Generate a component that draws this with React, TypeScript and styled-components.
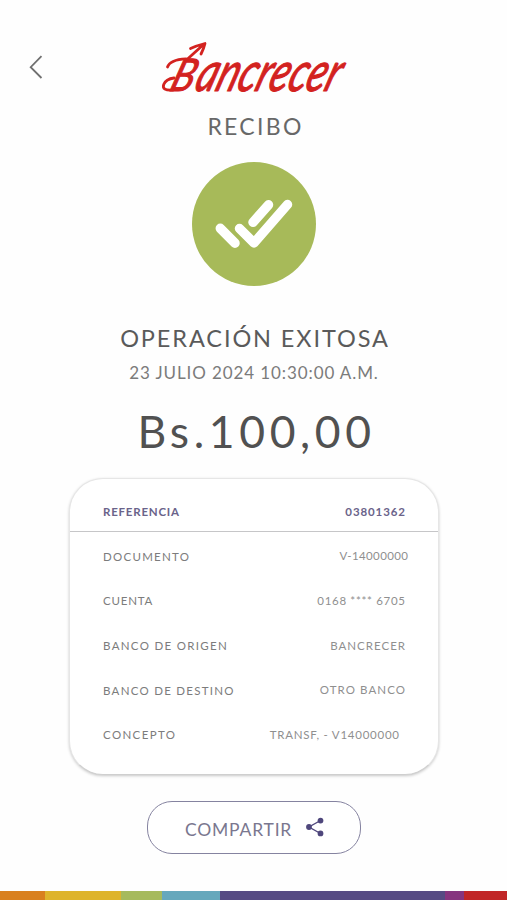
import React from "react";
import styled, { createGlobalStyle } from "styled-components";

const GlobalStyle = createGlobalStyle`
  * { box-sizing: border-box; }
  body { margin: 0; background: #fefefe; font-family: Lato, "Open Sans", sans-serif; }
`;

const Screen = styled.main`
  display: flex;
  flex-direction: column;
  width: 507px;
  height: 900px;
  overflow: hidden;
  background: #fefefe;
`;

const Header = styled.header`
  display: grid;
  grid-template-columns: 150px 207px 150px;
  height: 112px;
  padding-top: 36px;
`;

const BackButton = styled.button`
  width: 24px;
  height: 30px;
  margin: 16px 0 0 24px;
  padding: 0;
  border: 0;
  background: none;
  svg { display: block; }
`;

const Logo = styled.svg`
  display: block;
  overflow: visible;
`;

const LogoText = styled.text`
  font-family: Lato, sans-serif;
  font-style: italic;
  font-weight: 400;
  fill: #d3221f;
  stroke: #d3221f;
  stroke-width: 1.1px;
  stroke-linejoin: round;
`;

const Line = styled.div<{ $size: number; $height: number; $spacing: number; $color: string; $top?: number; $shift?: number }>`
  flex: none;
  font-size: ${(p) => p.$size}px;
  line-height: ${(p) => p.$height}px;
  letter-spacing: ${(p) => p.$spacing}px;
  color: ${(p) => p.$color};
  margin-top: ${(p) => p.$top ?? 0}px;
  padding-left: ${(p) => p.$shift ?? 0}px;
  text-align: center;
  white-space: nowrap;
`;

const Badge = styled.div`
  flex: none;
  width: 124px;
  height: 124px;
  margin: 22px 0 0 192px;
  border-radius: 50%;
  background: #a7ba59;
  svg { display: block; }
`;

const Card = styled.section`
  flex: none;
  width: 370px;
  height: 297px;
  margin: 20px 0 0 69px;
  border: 1px solid #e6e6e6;
  border-bottom-color: #cfcfcf;
  border-radius: 34px;
  background: #fff;
  box-shadow: 0 1px 3px rgba(0, 0, 0, 0.22);
`;

const Row = styled.div<{ $head?: boolean; $inset?: number }>`
  display: flex;
  justify-content: space-between;
  align-items: center;
  height: ${(p) => (p.$head ? "53px" : "44.7px")};
  padding: ${(p) => (p.$head ? "14px" : "0")} ${(p) => p.$inset ?? 33}px 0 33px;
  border-bottom: ${(p) => (p.$head ? "1px solid #c6c6c8" : "0")};
  margin-bottom: ${(p) => (p.$head ? "2.4px" : "0")};
  font-size: 11.5px;
  line-height: 16px;
  white-space: nowrap;
`;

const Label = styled.span<{ $spacing: number; $accent?: boolean }>`
  letter-spacing: ${(p) => p.$spacing}px;
  color: ${(p) => (p.$accent ? "#6a638a" : "#7c7c7c")};
  font-weight: ${(p) => (p.$accent ? 700 : 400)};
`;

const Value = styled(Label)`
  color: ${(p) => (p.$accent ? "#6a638a" : "#8f8f8f")};
  margin: 0 ${(p) => -p.$spacing}px 1px 0;
`;

const ShareButton = styled.button`
  display: flex;
  flex: none;
  align-items: center;
  width: 214px;
  height: 53px;
  margin: 26px 0 0 147px;
  padding: 0 0 0 37px;
  border: 1px solid #8583a0;
  border-radius: 25px;
  background: #fff;
  color: #7a778f;
  font: 400 17.5px/22px Lato, sans-serif;
  letter-spacing: 0.8px;
  span { padding-top: 5px; }
  svg { display: block; margin: 0 0 2px 13px; }
`;

const Stripe = styled.footer`
  display: grid;
  grid-template-columns: 45px 76px 41px 58px 225px 19px 43px;
  height: 9px;
  margin-top: auto;
`;

const Band = styled.span<{ $color: string }>`
  background: ${(p) => p.$color};
`;

const rows = [
  { label: "DOCUMENTO", ls: 1.27, value: "V-14000000", vs: 0.38, inset: 30 },
  { label: "CUENTA", ls: 0.8, value: "0168 **** 6705", vs: 0.68, inset: 33 },
  { label: "BANCO DE ORIGEN", ls: 1.32, value: "BANCRECER", vs: 1, inset: 33 },
  { label: "BANCO DE DESTINO", ls: 1.27, value: "OTRO BANCO", vs: 1.08, inset: 33 },
  { label: "CONCEPTO", ls: 1.36, value: "TRANSF, - V14000000", vs: 0.75, inset: 39 },
];

const bands = ["#d9801f", "#deb42c", "#a6ba5d", "#66a8bc", "#564b83", "#86357f", "#c12627"];

export default function App() {
  return (
    <>
      <GlobalStyle />
      <Screen>
        <Header>
          <BackButton aria-label="Volver">
            <svg width="24" height="30" viewBox="0 0 24 30" fill="none" stroke="#707070" strokeWidth="1.8">
              <path d="M17.5 4.2 6.7 15.2 17.5 26" />
            </svg>
          </BackButton>
          <Logo width="207" height="70" viewBox="150 36 207 70" role="img" aria-label="Bancrecer">
            <g transform="translate(0 91) skewX(-19)">
              <LogoText transform="translate(168 0) scale(0.85 1)" fontSize="45">B</LogoText>
              <LogoText transform="translate(193 0) scale(0.73 1)" fontSize="55">ancrecer</LogoText>
            </g>
            <g fill="none" stroke="#d3221f" strokeWidth="2.8" strokeLinecap="round" strokeLinejoin="round">
              <path d="M187 59.5 203.5 44.5M190.5 48.5Q197 45.5 205 43.5Q204 48 201 54" />
              <path d="M167.5 67Q170 59.5 186 58.8M174 78Q166 79 163.7 84.5Q161.5 91 173 90" />
            </g>
          </Logo>
        </Header>
        <Line $size={23} $height={28} $spacing={2.3} $color="#686868" $shift={4}>RECIBO</Line>
        <Badge>
          <svg width="124" height="124" viewBox="192 162 124 124" fill="none" stroke="#fff" strokeWidth="9.5" strokeLinecap="round" strokeLinejoin="round">
            <path d="M220.3 228.3 235 243.2" />
            <path d="M239.5 228.5 254 243 287.5 204.5" />
            <path d="M253 222.3 268.5 204.8" />
          </svg>
        </Badge>
        <Line $size={23.5} $height={28} $spacing={1.9} $color="#5a5a5a" $top={38} $shift={3}>OPERACIÓN EXITOSA</Line>
        <Line $size={17} $height={20} $spacing={0.9} $color="#7b7b7b" $top={11} $shift={1}>23 JULIO 2024 10:30:00 A.M.</Line>
        <Line $size={44.5} $height={54} $spacing={4.6} $color="#515151" $top={21} $shift={6}>Bs.100,00</Line>
        <Card>
          <Row $head>
            <Label $accent $spacing={0.78}>REFERENCIA</Label>
            <Value $accent $spacing={0.9}>03801362</Value>
          </Row>
          {rows.map((r) => (
            <Row key={r.label} $inset={r.inset}>
              <Label $spacing={r.ls}>{r.label}</Label>
              <Value $spacing={r.vs}>{r.value}</Value>
            </Row>
          ))}
        </Card>
        <ShareButton>
          <span>COMPARTIR</span>
          <svg width="20" height="20" viewBox="0 0 20 20" fill="#4f477c" stroke="#4f477c" strokeWidth="1.4">
            <path d="M15.5 3.5 4 10 15.5 16.5" fill="none" />
            <circle cx="15.5" cy="3.6" r="2.2" />
            <circle cx="4" cy="10" r="2.2" />
            <circle cx="15.5" cy="16.4" r="2.2" />
          </svg>
        </ShareButton>
        <Stripe>
          {bands.map((c) => <Band key={c} $color={c} />)}
        </Stripe>
      </Screen>
    </>
  );
}
